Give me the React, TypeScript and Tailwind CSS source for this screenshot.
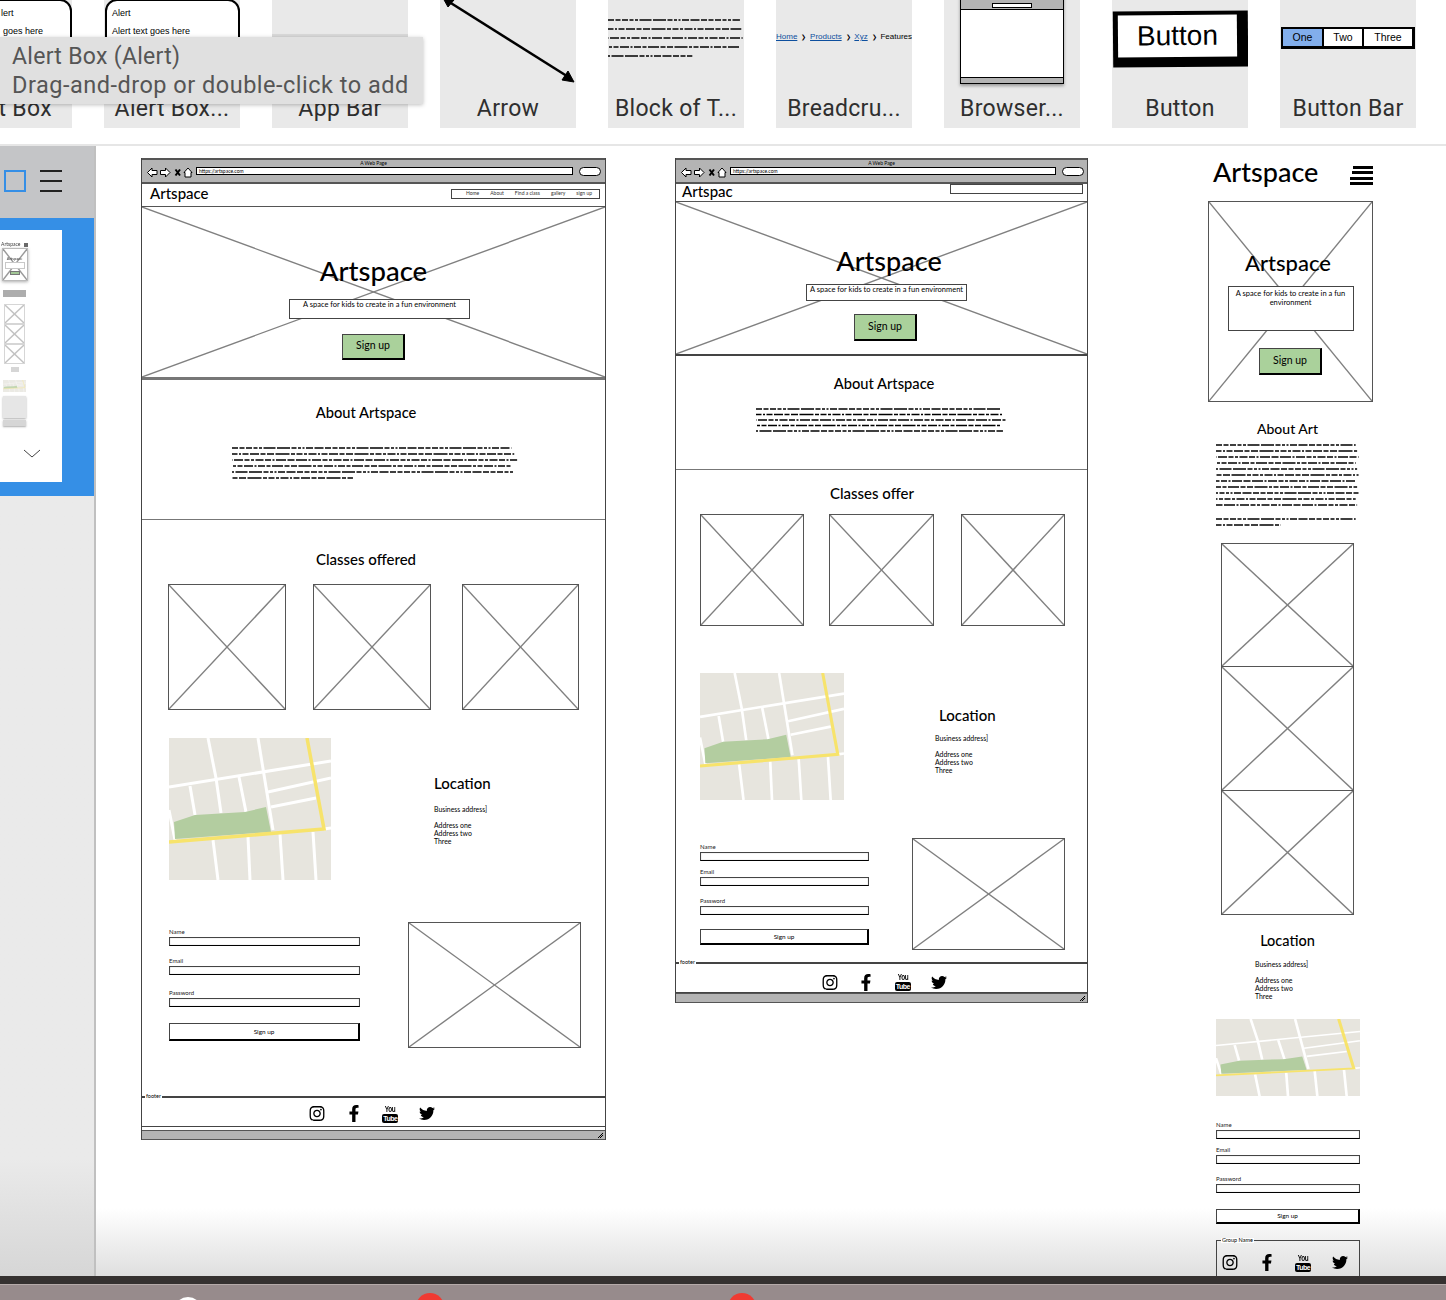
import React from 'react';
import { FaFacebookF, FaInstagram, FaTwitter } from 'react-icons/fa';

const sketchFont = "font-['Lato',sans-serif]";

const Txt = ({ className = '', children }: { className?: string; children: React.ReactNode }) => (
  <div className={`whitespace-nowrap leading-none text-black ${sketchFont} ${className}`}>{children}</div>
);

// image placeholder with the two diagonals, children sit on top of it
const XBox = ({ className, children }: { className: string; children?: React.ReactNode }) => (
  <div className={`relative shrink-0 bg-white border border-[#555] ${className}`}>
    <svg className="absolute inset-0 w-full h-full block" viewBox="0 0 100 100" preserveAspectRatio="none">
      <line x1="0" y1="0" x2="100" y2="100" stroke="#808080" strokeWidth="1.4" vectorEffect="non-scaling-stroke" />
      <line x1="100" y1="0" x2="0" y2="100" stroke="#808080" strokeWidth="1.4" vectorEffect="non-scaling-stroke" />
    </svg>
    {children && <div className="relative flex flex-col items-center">{children}</div>}
  </div>
);

const StreetMap = ({ className }: { className: string }) => (
  <svg className={`block shrink-0 ${className}`} viewBox="0 0 162 142" preserveAspectRatio="none">
    <rect width="162" height="142" fill="#e7e5de" />
    <g stroke="#fff" strokeWidth="3" fill="none">
      <polyline points="39,0 47,40 52,75" />
      <line x1="89" y1="0" x2="104" y2="92" />
      <line x1="0" y1="49" x2="162" y2="23" />
      <line x1="99" y1="54" x2="162" y2="40" />
      <line x1="102" y1="69" x2="147" y2="60" />
      <line x1="21" y1="48" x2="26" y2="77" />
      <line x1="70" y1="39" x2="77" y2="74" />
      <line x1="0" y1="72" x2="6" y2="102" />
      <line x1="44" y1="102" x2="49" y2="142" />
      <line x1="79" y1="99" x2="81" y2="142" />
      <line x1="111" y1="96" x2="114" y2="142" />
      <line x1="144" y1="94" x2="147" y2="142" />
      <line x1="155" y1="91" x2="162" y2="90" />
    </g>
    <polygon points="5,84 26,77 76,74 97,69 102,94 6,101" fill="#b3cda0" />
    <polyline points="138,0 155,91 0,104" fill="none" stroke="#f7e36b" strokeWidth="3.5" />
  </svg>
);

// the squiggly "block of text" lines
const dashes = [
  '6 1.5 5 1.5 6 1.5 4 1.5 3 1.5 12 1.5 13 1.5 5 1.5 3 1.5 2 1.5 7 1.5 9 1.5',
  '3 1.5 8 1.5 2 1.5 6 1.5 9 1.5 5 1.5 7 1.5 14 1.5 4 1.5 6 1.5',
  '11 1.5 2 1.5 9 1.5 5 1.5 3 1.5 8 1.5 6 1.5 2 1.5 10 1.5 7 1.5',
  '6 1.5 13 1.5 3 1.5 5 1.5 9 1.5 2 1.5 7 1.5 4 1.5 11 1.5 5 1.5',
];

const Squiggle = ({ className, rows, rowGap, lastWidth = 0.42 }: { className: string; rows: number; rowGap: number; lastWidth?: number }) => (
  <svg className={`block shrink-0 overflow-hidden ${className}`} height={rows * rowGap}>
    {Array.from({ length: rows }, (_, i) => (
      <line
        key={i}
        x1="0"
        y1={i * rowGap + 2}
        x2={i === rows - 1 ? `${lastWidth * 100}%` : `${97 + (i % 3)}%`}
        y2={i * rowGap + 2}
        stroke="#000"
        strokeWidth="1.7"
        strokeDasharray={dashes[i % 4]}
        strokeDashoffset={i * 7}
      />
    ))}
  </svg>
);

const GreenButton = ({ className }: { className: string }) => (
  <div className={`w-[63px] bg-[#aad19b] border border-[#444] border-r-2 border-b-2 border-r-black border-b-black flex items-center justify-center text-[10.5px] text-black ${sketchFont} ${className}`}>
    Sign up
  </div>
);

const Tagline = ({ className }: { className: string }) => (
  <div className={`bg-white border border-[#444] text-center text-[7.5px] text-black ${sketchFont} ${className}`}>
    A space for kids to create in a fun environment
  </div>
);

const Address = ({ className }: { className: string }) => (
  <div className={`text-[6.9px] leading-[8px] text-black ${sketchFont} ${className}`}>
    <div className="mb-2">Business address]</div>
    <div>Address one</div>
    <div>Address two</div>
    <div>Three</div>
  </div>
);

const Field = ({ label, className = '' }: { label: string; className?: string }) => (
  <div className={className}>
    <div className={`h-[9px] text-[6px] leading-[8px] text-[#222] ${sketchFont}`}>{label}</div>
    <div className="h-[9px] bg-white border border-[#444] border-b-black shadow-[inset_0_0_1px_#999]" />
  </div>
);

const SignupForm = ({ className, emailGap, passGap, btnClass }: { className: string; emailGap: string; passGap: string; btnClass: string }) => (
  <div className={`flex flex-col shrink-0 ${className}`}>
    <Field label="Name" />
    <Field label="Email" className={emailGap} />
    <Field label="Password" className={passGap} />
    <div className={`bg-white border border-[#444] border-b-2 border-r-2 border-b-black border-r-black flex items-center justify-center text-[6.4px] text-black ${sketchFont} ${btnClass}`}>
      Sign up
    </div>
  </div>
);

const YouTubeStack = () => (
  <div className="w-4 h-[18px] flex flex-col items-center leading-none font-['Liberation_Sans',sans-serif] font-bold">
    <span className="h-[9px] text-[8.5px] tracking-[-0.5px] text-black scale-x-75">You</span>
    <span className="w-4 h-[9px] bg-black rounded-[2px] text-white text-[7px] tracking-[-0.5px] flex items-center justify-center">Tube</span>
  </div>
);

const SocialIcons = ({ className = '' }: { className?: string }) => (
  <div className={`flex items-center gap-[20.5px] text-black ${className}`}>
    <FaInstagram className="w-4 h-[17px]" />
    <FaFacebookF className="w-4 h-[17px]" />
    <YouTubeStack />
    <FaTwitter className="w-4 h-[17px]" />
  </div>
);

const TitleBar = ({ className, urlClass }: { className: string; urlClass: string }) => (
  <div className={`relative h-[26px] shrink-0 bg-[#b4b4b4] border-y-2 border-[#555] flex items-start pt-[7px] ${className}`}>
    <Txt className="absolute left-0 right-0 top-[1px] text-center text-[5px]">A Web Page</Txt>
    <svg className="w-[46px] h-[11px] shrink-0" viewBox="0 0 46 11" fill="#fff" stroke="#000" strokeWidth="1">
      <path d="M0.5 5.5 5 1v2.5h5v4H5V10z" />
      <path d="M23 5.5 18.5 1v2.5h-5v4h5V10z" />
      <path d="m28.5 2.5 4.5 6m0-6-4.5 6" strokeWidth="2" />
      <path d="m37 5.5 4-4.5 4 4.5h-1V10h-6V5.5z" />
    </svg>
    <div className={`h-[8px] ml-[3px] bg-white border border-black flex items-center pl-[2px] text-[5px] leading-none text-black ${sketchFont} ${urlClass}`}>
      https://artspace.com
    </div>
    <div className="w-[22px] h-[9px] ml-[6px] bg-white border border-black rounded-full" />
  </div>
);

const StatusBar = ({ className = '' }: { className?: string }) => (
  <div className={`h-[10px] shrink-0 bg-[#b4b4b4] border-y border-[#555] flex items-center justify-end pr-[2px] ${className}`}>
    <svg className="w-[6px] h-[6px]" viewBox="0 0 6 6" stroke="#000" fill="none"><path d="M1 6 6 1M3 6l3-3" /></svg>
  </div>
);

const Footer = ({ className = '' }: { className?: string }) => (
  <div className={`relative h-[31px] shrink-0 bg-white border-t-2 border-b border-[#444] flex items-center justify-center ${className}`}>
    <Txt className="absolute left-[3px] -top-[4px] px-px bg-white text-[5.5px] text-[#333]">footer</Txt>
    <SocialIcons />
  </div>
);

const DesktopWindow = () => (
  <div className="absolute left-[45px] top-[12px] w-[465px] h-[982px] border-x border-[#444] flex flex-col">
    <TitleBar className="pl-[5px]" urlClass="w-[377px]" />
    <div className="h-[22px] shrink-0 flex items-center justify-between pl-2 pr-[5px]">
      <Txt className="-mt-[4px] text-[15px] font-medium">Artspace</Txt>
      <div className={`w-[149px] h-[10px] -mt-[3px] border border-[#444] flex items-center justify-end gap-[11px] pr-[7px] text-[5px] text-[#333] ${sketchFont}`}>
        <span>Home</span><span>About</span><span>Find a class</span><span>gallery</span><span>sign up</span>
      </div>
    </div>
    <XBox className="h-[174px] border-x-0 border-b-[3px] border-b-[#777]">
      <Txt className="mt-[50px] text-[27.5px] font-medium">Artspace</Txt>
      <Tagline className="w-[181px] h-[20px] mt-[14px] ml-[12px] leading-[10px]" />
      <GreenButton className="h-[26px] mt-[15px]" />
    </XBox>
    <div className="h-[140px] shrink-0 border-b border-[#777] flex flex-col">
      <Txt className="mt-[25px] mr-[15px] text-center text-[14.7px] font-medium">About Artspace</Txt>
      <Squiggle className="ml-[90px] mt-[26px] w-[288px]" rows={6} rowGap={6} />
    </div>
    <Txt className="mt-[32px] mr-[15px] text-center text-[15px] font-medium">Classes offered</Txt>
    <div className="flex mt-[17px] pl-[26px] gap-[27px]">
      <XBox className="w-[118px] h-[126px]" />
      <XBox className="w-[118px] h-[126px]" />
      <XBox className="w-[117px] h-[126px] ml-1" />
    </div>
    <div className="flex mt-[28px] pl-[27px]">
      <StreetMap className="w-[162px] h-[142px]" />
      <div className="ml-[103px] pt-[38px]">
        <Txt className="text-[15px] font-medium">Location</Txt>
        <Address className="mt-[14px]" />
      </div>
    </div>
    <div className="flex mt-[42px] pl-[27px]">
      <SignupForm className="w-[191px] mt-[6px]" emailGap="mt-[11px]" passGap="mt-[14px]" btnClass="mt-4 h-[18px]" />
      <XBox className="w-[173px] h-[126px] ml-[48px]" />
    </div>
    <Footer className="mt-auto pt-[3px] pr-[3px]" />
    <StatusBar className="mt-[3px]" />
  </div>
);

const TabletWindow = () => (
  <div className="absolute left-[579px] top-[12px] w-[413px] h-[845px] border-x border-[#444] flex flex-col">
    <TitleBar className="pl-[5px]" urlClass="w-[326px]" />
    <div className="h-[17px] shrink-0 overflow-hidden flex items-start justify-between pl-[6px] pr-[4px]">
      <Txt className="text-[15px] font-medium">Artspac</Txt>
      <div className="w-[133px] h-[10px] border border-[#444]" />
    </div>
    <XBox className="h-[155px] border-x-0 border-b-2 border-b-[#444]">
      <Txt className="mt-[45px] ml-[15px] text-[27px] font-medium">Artspace</Txt>
      <Tagline className="w-[161px] h-[17px] mt-[10px] ml-[10px] leading-[9px]" />
      <GreenButton className="h-[27px] mt-[13px] ml-2" />
    </XBox>
    <div className="h-[114px] shrink-0 border-b border-[#777] flex flex-col">
      <Txt className="mt-[20px] ml-[5px] text-center text-[14.7px] font-medium">About Artspace</Txt>
      <Squiggle className="ml-[80px] mt-4 w-[252px]" rows={5} rowGap={5.5} lastWidth={0.98} />
    </div>
    <Txt className="mt-[16px] mr-[19px] text-center text-[15px] font-medium">Classes offer</Txt>
    <div className="flex mt-[13px] pl-[24px] gap-[25px]">
      <XBox className="w-[104px] h-[112px]" />
      <XBox className="w-[105px] h-[112px]" />
      <XBox className="w-[104px] h-[112px] ml-[2px]" />
    </div>
    <div className="flex mt-[47px] pl-[24px]">
      <StreetMap className="w-[144px] h-[127px]" />
      <div className="ml-[91px] pt-[35px]">
        <Txt className="ml-1 text-[15px] font-medium">Location</Txt>
        <Address className="mt-[11px]" />
      </div>
    </div>
    <div className="flex mt-[38px] pl-[24px]">
      <SignupForm className="w-[169px] mt-[5px]" emailGap="mt-[7px]" passGap="mt-[11px]" btnClass="mt-[14px] h-[16px]" />
      <XBox className="w-[153px] h-[112px] ml-[43px]" />
    </div>
    <Footer className="mt-auto pt-[8px] pl-[6px]" />
    <StatusBar />
  </div>
);

const MobileColumn = () => (
  <div className="absolute left-[1112px] top-[12px] w-[165px] flex flex-col">
    <div className="h-[43px] flex items-start justify-between pl-[5px]">
      <Txt className="text-[27px] font-medium">Artspace</Txt>
      <div className="w-[23px] h-[19px] mt-2 flex flex-col items-end justify-between">
        <div className="w-[20px] h-[3px] bg-black" />
        <div className="w-[21px] h-[3px] bg-black" />
        <div className="w-[23px] h-[3px] bg-black" />
        <div className="w-[23px] h-[3px] bg-black" />
      </div>
    </div>
    <XBox className="h-[201px]">
      <Txt className="mt-[50px] mr-[5px] text-[22px] font-medium">Artspace</Txt>
      <Tagline className="w-[126px] h-[45px] mt-[12px] px-[3px] pt-[2px] leading-[9px]" />
      <GreenButton className="h-[27px] mt-[17px]" />
    </XBox>
    <Txt className="mt-[20px] mr-[6px] text-center text-[14px] font-medium">About Art</Txt>
    <Squiggle className="ml-2 mt-[7px] w-[144px]" rows={11} rowGap={6} lastWidth={0.98} />
    <Squiggle className="ml-2 mt-[8px] w-[144px]" rows={2} rowGap={6} lastWidth={0.45} />
    <div className="flex flex-col ml-[13px] mt-[14px]">
      <XBox className="w-[133px] h-[124px]" />
      <XBox className="w-[133px] h-[125px] -mt-px" />
      <XBox className="w-[133px] h-[125px] -mt-px" />
    </div>
    <Txt className="mt-[19px] text-center mr-[6px] text-[14.5px] font-medium">Location</Txt>
    <Address className="mt-[11px] ml-[47px]" />
    <StreetMap className="ml-2 mt-[19px] w-[144px] h-[77px]" />
    <SignupForm className="ml-2 mt-[25px] w-[144px]" emailGap="mt-[7px]" passGap="mt-[11px]" btnClass="mt-4 h-[15px]" />
    <div className="relative ml-2 mt-4 w-[144px] h-[60px] border border-[#444] pl-[5px] pt-[13px]">
      <Txt className="absolute left-[4px] -top-[3px] px-px bg-white text-[5.5px] text-[#333]">Group Name</Txt>
      <SocialIcons />
    </div>
  </div>
);

const Tile = ({ label, children }: { label: string; children?: React.ReactNode }) => (
  <div className="w-[136px] h-[128px] shrink-0 bg-[#e9e9e9] flex flex-col">
    <div className="relative h-[90px] shrink-0 overflow-hidden">{children}</div>
    <div className="h-[38px] flex items-center justify-center whitespace-nowrap text-[23px] tracking-[0.3px] text-[#2f2f2f] font-['Roboto',sans-serif]">
      {label}
    </div>
  </div>
);

const AlertPreview = ({ title, body, titleClass, bodyClass }: { title: string; body: string; titleClass: string; bodyClass: string }) => (
  <div className="ml-px -mt-px h-[60px] bg-white border-2 border-black rounded-[12px] font-['Liberation_Sans',sans-serif] text-[9px] leading-none text-black flex flex-col whitespace-nowrap">
    <div className={`mt-[8px] ${titleClass}`}>{title}</div>
    <div className={`mt-[9px] ${bodyClass}`}>{body}</div>
  </div>
);

const Crumb = () => <span className="text-[6px] text-black">❯</span>;

const Palette = () => (
  <div className="h-[146px] shrink-0 bg-white border-b-2 border-[#e6e6e6] overflow-hidden flex gap-8 -ml-[64px]">
    <Tile label="Alert Box">
      <AlertPreview title="lert" body="goes here" titleClass="ml-[62px]" bodyClass="ml-[64px]" />
    </Tile>
    <Tile label="Alert Box...">
      <AlertPreview title="Alert" body="Alert text goes here" titleClass="ml-[5px]" bodyClass="ml-[5px]" />
    </Tile>
    <Tile label="App Bar">
      <div className="mt-[34px] h-[20px] bg-[#d9d9d9] text-[6px] leading-none pl-2 pt-[2px] text-black font-['Liberation_Sans',sans-serif]">≡ Heading</div>
    </Tile>
    <Tile label="Arrow">
      <svg className="w-full h-full" viewBox="0 0 136 90" fill="#000" stroke="#000">
        <line x1="6" y1="0" x2="130" y2="78" strokeWidth="2.5" />
        <polygon points="134,82 122,80 128,71" />
        <polygon points="3,-2 14,0 8,7" />
      </svg>
    </Tile>
    <Tile label="Block of T...">
      <Squiggle className="mt-[18px] w-[136px]" rows={5} rowGap={9} lastWidth={0.62} />
    </Tile>
    <Tile label="Breadcru...">
      <div className="mt-[32px] flex items-center justify-between text-[8px] leading-[10px] font-['Liberation_Sans',sans-serif] text-[#0d4f9e]">
        <span className="underline">Home</span><Crumb />
        <span className="underline">Products</span><Crumb />
        <span className="underline">Xyz</span><Crumb />
        <span className="text-black">Features</span>
      </div>
    </Tile>
    <Tile label="Browser...">
      <div className="ml-4 -mt-[6px] w-[104px] h-[90px] bg-white border border-black shadow-[0_2px_3px_#999] flex flex-col justify-between">
        <div className="h-[15px] bg-[#b4b4b4] border-b border-black flex items-end justify-center pb-px">
          <div className="w-[40px] h-[5px] bg-white border border-black" />
        </div>
        <div className="h-[6px] bg-[#b4b4b4] border-t border-black" />
      </div>
    </Tile>
    <Tile label="Button">
      <div className="ml-px mt-[11px] w-[135px] h-[56px] bg-black -rotate-[0.5deg] pl-[5px] pt-[4px]">
        <div className="w-[119px] h-[42px] bg-white flex items-center justify-center text-[28px] font-medium text-black font-['Liberation_Sans',sans-serif]">
          Button
        </div>
      </div>
    </Tile>
    <Tile label="Button Bar">
      <div className="ml-px mt-[27px] w-[134px] h-[22px] border-2 border-b-[3px] border-r-[3px] border-black flex text-[10.5px] text-black font-['Liberation_Sans',sans-serif]">
        <div className="w-[41px] bg-[#82aeeb] border-r-2 border-black flex items-center justify-center">One</div>
        <div className="w-[40px] bg-white border-r-2 border-black flex items-center justify-center">Two</div>
        <div className="flex-1 bg-white flex items-center justify-center">Three</div>
      </div>
    </Tile>
  </div>
);

// tiny copy of the mobile layout, faded in the page list
const MiniPage = () => (
  <div className="w-[62px] h-[252px] bg-white flex flex-col">
    <div className="w-[27px] ml-px pt-[12px] flex flex-col items-center blur-[0.4px] opacity-80">
      <div className="w-full flex items-center justify-between">
        <Txt className="text-[5px]">Artspace</Txt>
        <div className="w-[4px] h-[4px] bg-[#444]" />
      </div>
      <XBox className="w-[26px] h-[33px] mt-px shadow-[0_1px_3px_#999] border-[#aaa]">
        <Txt className="mt-[8px] text-[4px]">Artspace</Txt>
        <div className="w-[20px] h-[7px] mt-px bg-white border border-[#bbb]" />
        <div className="w-[10px] h-[4px] mt-[2px] bg-[#8cba7c] border border-[#555]" />
      </XBox>
      <div className="w-[23px] h-[7px] mt-[9px] bg-[#999]" />
      <div className="flex flex-col mt-[7px] opacity-60">
        <XBox className="w-[21px] h-[20px] border-[#aaa]" />
        <XBox className="w-[21px] h-[20px] border-[#aaa]" />
        <XBox className="w-[21px] h-[20px] border-[#aaa]" />
      </div>
      <div className="w-[8px] h-[5px] mt-[3px] bg-[#ccc]" />
      <StreetMap className="w-[23px] h-[12px] mt-[8px]" />
      <div className="w-[23px] h-[22px] mt-[4px] bg-[#e0e0e0] shadow-[0_1px_2px_#999]" />
      <div className="w-[23px] h-[6px] mt-[2px] bg-[#ccc] shadow-[0_1px_2px_#999]" />
    </div>
    <svg className="w-[18px] h-[10px] ml-[23px] mt-[23px]" viewBox="0 0 18 10" fill="none" stroke="#444" strokeWidth="1">
      <polyline points="1,1 9,8 17,1" />
    </svg>
  </div>
);

const Sidebar = () => (
  <div className="w-[96px] shrink-0 border-r-2 border-[#c0c0c0] flex flex-col">
    <div className="h-[72px] shrink-0 bg-[#c4c5c7] flex items-center pl-[4px] gap-[14px] pb-[2px]">
      <div className="w-[22px] h-[22px] border-2 border-[#358fe6]" />
      <div className="w-[22px] h-[22px] flex flex-col justify-between">
        <div className="h-[2px] bg-[#222]" />
        <div className="h-[2px] bg-[#222]" />
        <div className="h-[2px] bg-[#222]" />
      </div>
    </div>
    <div className="h-[278px] shrink-0 bg-[#358fe6] pt-[12px]">
      <MiniPage />
    </div>
    <div className="flex-1 bg-gradient-to-b from-[#eaeaea] from-[85%] to-[#d6d6d6]" />
  </div>
);

export default function App() {
  return (
    <div className="relative w-[1446px] h-[1300px] overflow-hidden bg-white flex flex-col">
      <Palette />
      <div className="flex flex-1 min-h-0">
        <Sidebar />
        {/* free canvas holding the three wireframes */}
        <div className="relative flex-1 overflow-hidden bg-gradient-to-b from-white from-[94%] to-[#dfdfdf]">
          <DesktopWindow />
          <TabletWindow />
          <MobileColumn />
        </div>
      </div>
      <div className="h-2 shrink-0 bg-[#353130]" />
      <div className="relative h-4 shrink-0 bg-[#978b8c] border-t border-[#b5aaa9] overflow-hidden">
        <div className="absolute left-[174px] top-[12px] w-[28px] h-[28px] rounded-full bg-white" />
        <div className="absolute left-[416px] top-[8px] w-[28px] h-[28px] rounded-full bg-[#f03a32]" />
        <div className="absolute left-[728px] top-[8px] w-[28px] h-[28px] rounded-full bg-[#f03a32]" />
      </div>
      {/* hover tooltip over the palette */}
      <div className="absolute left-0 top-[37px] w-[423px] h-[67px] bg-[#e0e0e0] shadow-[0_1px_4px_rgba(0,0,0,0.25)] pl-[12px] pt-[6px] leading-[28px] text-[#555] font-['Roboto',sans-serif] whitespace-nowrap">
        <div className="text-[23px] tracking-[0.3px]">Alert Box (Alert)</div>
        <div className="text-[23.5px] tracking-[0.5px]">Drag-and-drop or double-click to add</div>
      </div>
    </div>
  );
}
